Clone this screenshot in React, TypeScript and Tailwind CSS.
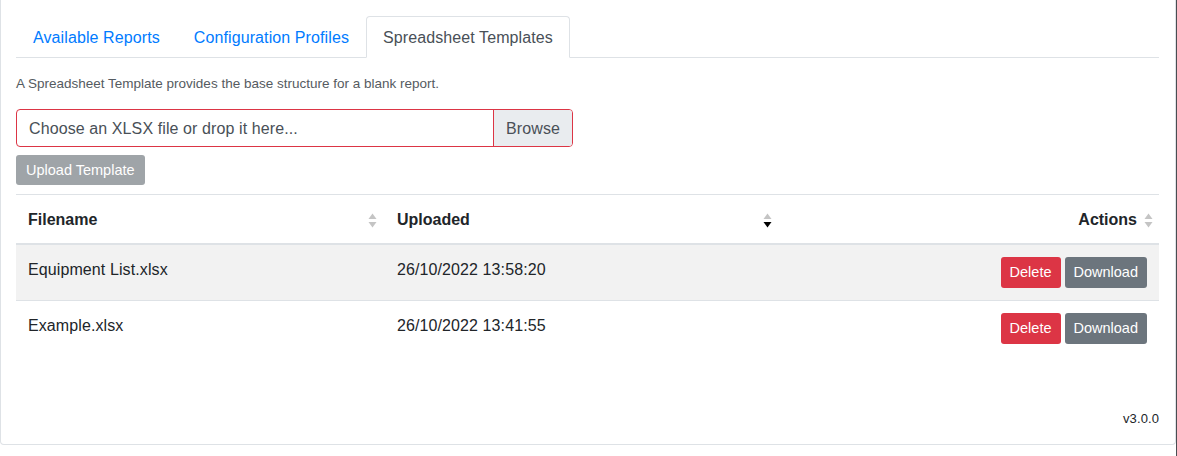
import React from 'react';

type Template = {
  filename: string;
  uploaded: string;
};

const templates: Template[] = [
  { filename: 'Equipment List.xlsx', uploaded: '26/10/2022 13:58:20' },
  { filename: 'Example.xlsx', uploaded: '26/10/2022 13:41:55' },
];

const SortIcon = ({ active }: { active?: boolean }) => (
  <svg width="9" height="15" viewBox="0 0 9 15" className="shrink-0">
    <path d="M4.5 0.5 L8.5 6 L0.5 6 Z" fill="#c4c4c4" />
    <path d="M0.5 9 L8.5 9 L4.5 14.5 Z" fill={active ? '#000000' : '#c4c4c4'} />
  </svg>
);

const App = () => {
  const tabs = ['Available Reports', 'Configuration Profiles', 'Spreadsheet Templates'];

  return (
    <div className="flex w-[1177px] h-[456px] bg-white font-['Liberation_Sans',Arial,sans-serif] text-[#212529]">
      <div className="flex flex-col w-[1176px] h-[445px] border-x border-b border-[#dee2e6] rounded-b-[4px] pl-[15px] pr-4 pt-4">
        {/* tabs */}
        <div className="flex border-b border-[#dee2e6]">
          {tabs.map((tab, i) => {
            const active = i === 2;
            return (
              <div
                key={tab}
                className={
                  active
                    ? 'px-4 pt-[9px] pb-[7px] -mb-px text-base leading-6 tracking-[0.1px] text-[#495057] bg-white border border-[#dee2e6] border-b-white rounded-t-[4px]'
                    : 'px-4 pt-[9px] pb-[7px] -mb-px text-base leading-6 tracking-[0.1px] text-[#007bff] border border-transparent'
                }
              >
                {tab}
              </div>
            );
          })}
        </div>

        <p className="mt-[17px] text-[13.5px] leading-[18px] text-[#555b61]">
          A Spreadsheet Template provides the base structure for a blank report.
        </p>

        {/* file input */}
        <div className="mt-4 flex w-[557px] h-[38px] border border-[#dc3545] rounded-[4px] overflow-hidden text-base tracking-[0.1px] text-[#495057]">
          <div className="flex-1 flex items-center px-3 pt-px">Choose an XLSX file or drop it here...</div>
          <div className="flex items-center px-3 pt-px bg-[#e9ecef] border-l border-[#dc3545]">Browse</div>
        </div>

        <div className="mt-2">
          <button
            type="button"
            disabled
            className="h-[30px] px-[10px] pt-px rounded-[3px] bg-[#9fa4a8] text-white text-[14.5px]"
          >
            Upload Template
          </button>
        </div>

        {/* table */}
        <table className="mt-[9px] w-full border-collapse text-base">
          <thead>
            <tr className="border-t border-[#dee2e6]">
              <th className="w-[367px] border-b-2 border-[#dee2e6] pl-3 pr-[6px] pt-[13px] pb-[11px] text-left font-bold leading-6">
                <div className="flex items-center justify-between">
                  <span>Filename</span>
                  <SortIcon />
                </div>
              </th>
              <th className="w-[397px] border-b-2 border-[#dee2e6] pl-[14px] pr-[8px] pt-[13px] pb-[11px] text-left font-bold leading-6">
                <div className="flex items-center justify-between">
                  <span>Uploaded</span>
                  <SortIcon active />
                </div>
              </th>
              <th className="border-b-2 border-[#dee2e6] pl-3 pr-[6px] pt-[13px] pb-[11px] text-right font-bold leading-6">
                <div className="flex items-center justify-end gap-[7px]">
                  <span>Actions</span>
                  <SortIcon />
                </div>
              </th>
            </tr>
          </thead>
          <tbody>
            {templates.map((t, i) => (
              <tr key={t.filename} className={i % 2 === 0 ? 'bg-[#f2f2f2]' : 'border-t border-[#dee2e6]'}>
                <td className="align-top px-3 pt-[13px] pb-[11px] leading-6 tracking-[0.1px]">{t.filename}</td>
                <td className="align-top pl-[14px] pr-3 pt-[13px] pb-[11px] leading-6 tracking-[0.1px]">{t.uploaded}</td>
                <td className="align-top px-3 py-3">
                  <div className="flex justify-end gap-1">
                    <button type="button" className="h-[31px] px-[9px] pt-px rounded-[3px] bg-[#dc3545] text-white text-[14.5px]">
                      Delete
                    </button>
                    <button type="button" className="h-[31px] px-[9px] pt-px rounded-[3px] bg-[#6c757d] text-white text-[14.5px]">
                      Download
                    </button>
                  </div>
                </td>
              </tr>
            ))}
          </tbody>
        </table>

        <div className="mt-auto pb-[16px] text-right text-[13px] leading-[18px] tracking-[0.1px]">v3.0.0</div>
      </div>
      <div className="w-px h-full bg-[#4a4d52]" />
    </div>
  );
};

export default App;
